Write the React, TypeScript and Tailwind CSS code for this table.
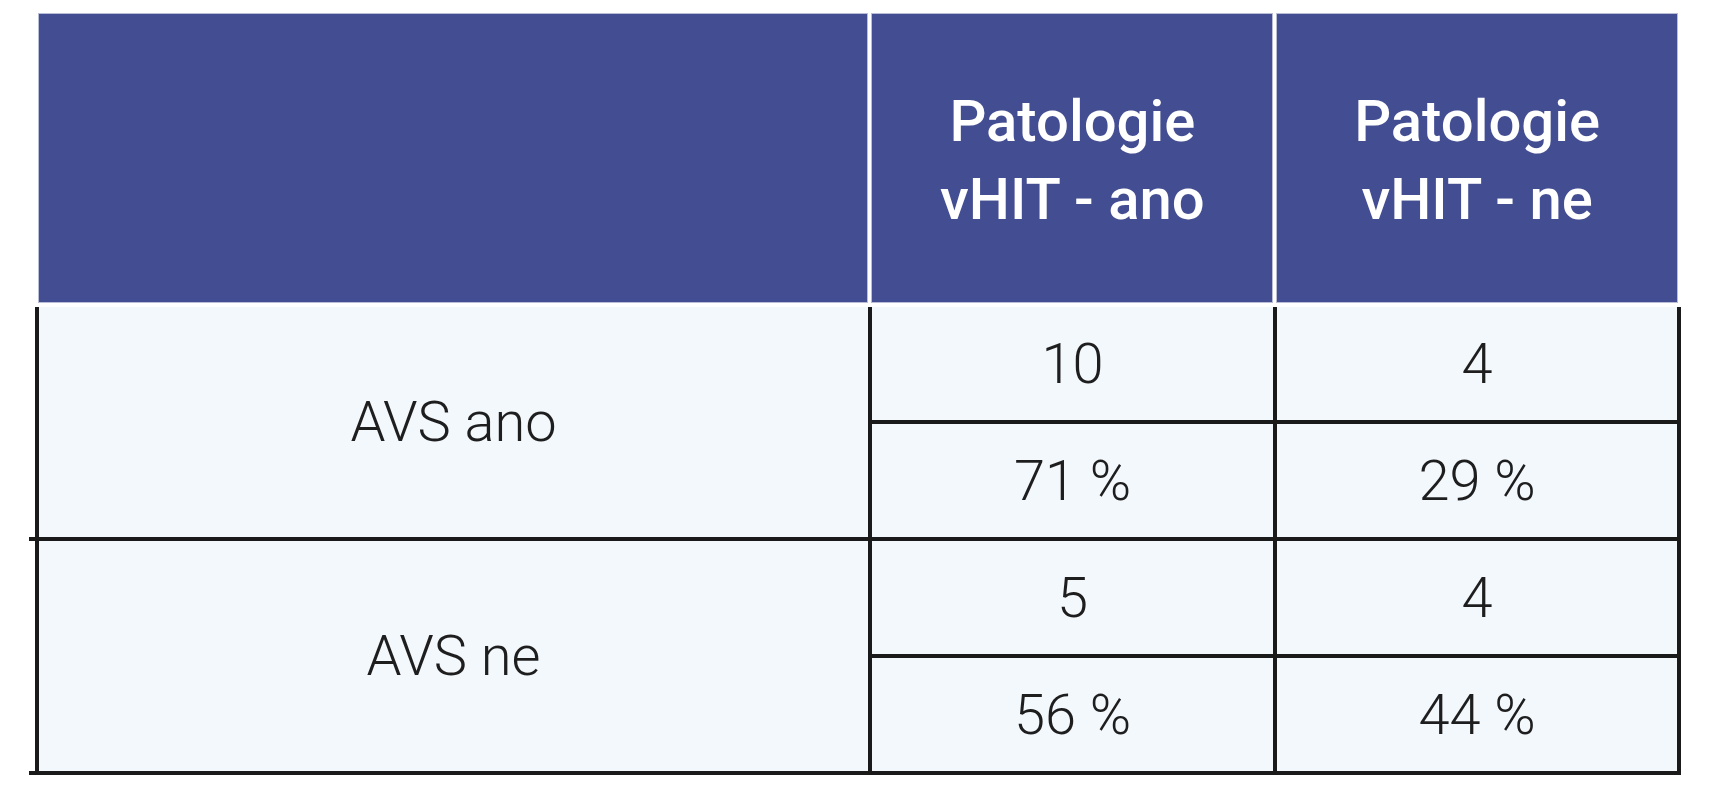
import React from "react";

const ROWS = [
  { label: "AVS ano", cells: [["10", "4"], ["71 %", "29 %"]] },
  { label: "AVS ne", cells: [["5", "4"], ["56 %", "44 %"]] },
];

const HEAD = ["Patologie\nvHIT - ano", "Patologie\nvHIT - ne"];

function Cell({ children }: { children: React.ReactNode }) {
  return (
    <div className="flex flex-1 items-center justify-center text-[56px] font-light text-[#1e1e1e]">
      {children}
    </div>
  );
}

export default function App() {
  return (
    <div
      className="min-h-screen bg-white pt-[14px]"
      style={{ fontFamily: "Roboto, 'Liberation Sans', sans-serif" }}
    >
      {/* header */}
      <div className="ml-[39px] flex h-[288px] w-[1638px] gap-[5px]">
        <div className="w-[829px] bg-[#434d91] outline outline-1 outline-[#b9bdd6]" />
        {HEAD.map((h) => (
          <div
            key={h}
            className="flex w-[400px] items-center justify-center whitespace-pre-line bg-[#434d91] pt-[4px] text-center text-[58px] font-medium leading-[78px] text-white outline outline-1 outline-[#b9bdd6]"
          >
            {h}
          </div>
        ))}
      </div>

      {/* body */}
      <div className="ml-[29px] mt-[5px] w-[1652px]">
        {ROWS.map((row) => (
          <div key={row.label}>
            <div className="ml-[6px] flex h-[230px] border-x-[4px] border-[#1a1a1a] bg-[#f3f8fd]">
              <div className="flex w-[833px] items-center justify-center border-r-[4px] border-[#1a1a1a] text-[56px] font-light text-[#1e1e1e]">
                {row.label}
              </div>
              <div className="flex flex-1 flex-col">
                {row.cells.map((pair, i) => (
                  <div
                    key={i}
                    className={`flex flex-1 ${i === 0 ? "border-b-[4px] border-[#1a1a1a]" : ""}`}
                  >
                    <div className="flex w-[405px] border-r-[4px] border-[#1a1a1a]">
                      <Cell>{pair[0]}</Cell>
                    </div>
                    <Cell>{pair[1]}</Cell>
                  </div>
                ))}
              </div>
            </div>
            <div className="h-[4px] bg-[#1a1a1a]" />
          </div>
        ))}
      </div>
    </div>
  );
}
